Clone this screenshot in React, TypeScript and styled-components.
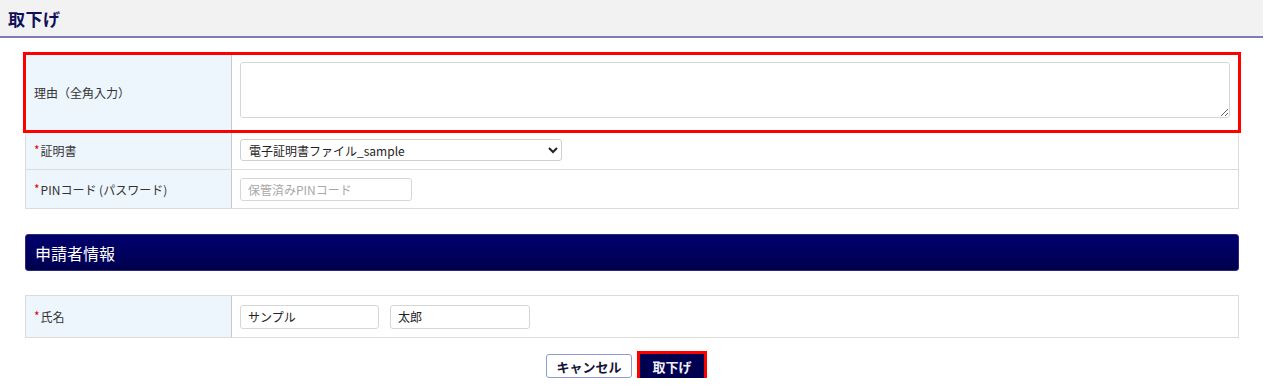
import React from "react";
import styled, { createGlobalStyle } from "styled-components";

const Global = createGlobalStyle`
  html, body { margin: 0; padding: 0; background: #fff; }
  body { font-family: "Noto Sans CJK JP", "Noto Sans", sans-serif; color: #333; }
  * { box-sizing: border-box; }
`;

const Page = styled.div`
  width: 1266px;
`;

const TitleBar = styled.div`
  height: 38px;
  margin-right: 3px;
  background: #f2f2f2;
  border-bottom: 2px solid #7d7db3;
  display: flex;
  align-items: center;
  padding-left: 8px;
`;

const Title = styled.h1`
  margin: 0;
  font-size: 17px;
  font-weight: 700;
  color: #10105a;
  letter-spacing: 0.5px;
`;

const Content = styled.div`
  padding: 15px 27px 0 25px;
  display: flex;
  flex-direction: column;
`;

const Table = styled.div<{ $mt?: number }>`
  border-top: 1px solid #dcdcdc;
  border-left: 1px solid #dcdcdc;
  border-right: 1px solid #dcdcdc;
  margin-top: ${(p) => p.$mt ?? 0}px;
`;

const Row = styled.div<{ $h: number; $highlight?: boolean }>`
  display: grid;
  grid-template-columns: 206px 1fr;
  height: ${(p) => p.$h}px;
  border-bottom: 1px solid #dcdcdc;
  ${(p) =>
    p.$highlight &&
    `outline: 3px solid #ff0000; outline-offset: -1px; position: relative; z-index: 1; margin: 0 -1px; padding: 0 1px;`}
`;

const Label = styled.div`
  background: #edf5fd;
  border-right: 1px solid #c9c9c9;
  display: flex;
  align-items: center;
  padding-left: 8px;
  font-size: 12px;
  color: #333;
`;

const Req = styled.span`
  color: #e60000;
  font-size: 12px;
  margin-right: 1px;
  position: relative;
  top: -1px;
`;

const Value = styled.div<{ $align?: string }>`
  display: flex;
  align-items: ${(p) => p.$align ?? "center"};
  padding: 0 8px;
  gap: 11px;
  background: #fff;
`;

const TextArea = styled.textarea`
  display: block;
  width: 100%;
  height: 56px;
  margin-top: 8px;
  border: 1px solid #d6d6d6;
  border-radius: 3px;
  font-family: inherit;
  font-size: 12px;
  outline: none;
`;

const Select = styled.select`
  width: 322px;
  height: 22px;
  border: 1px solid #cfcfcf;
  border-radius: 3px;
  background: #fff;
  font-family: "Noto Sans CJK JP", sans-serif;
  font-size: 12px;
  color: #222;
  padding: 0 4px;
  outline: none;
`;

const Input = styled.input<{ $w: number; $h: number }>`
  width: ${(p) => p.$w}px;
  height: ${(p) => p.$h}px;
  border: 1px solid #d6d6d6;
  border-radius: 3px;
  font-family: "Noto Sans CJK JP", sans-serif;
  font-size: 12px;
  color: #222;
  padding: 0 7px;
  outline: none;
  &::placeholder { color: #a8a8a8; }
`;

const Section = styled.div`
  margin-top: 25px;
  height: 37px;
  border-radius: 3px;
  background: linear-gradient(#00006e, #00004f);
  border: 1px solid #2a2a78;
  display: flex;
  align-items: center;
  padding-left: 9px;
  color: #fff;
  font-size: 16px;
`;

const Buttons = styled.div`
  display: flex;
  justify-content: center;
  align-items: center;
  gap: 8px;
  margin-top: 16px;
  padding-right: 14px;
`;

const Button = styled.button<{ $primary?: boolean }>`
  height: 24px;
  padding: 0;
  width: ${(p) => (p.$primary ? 64 : 86)}px;
  font-family: "Noto Sans CJK JP", sans-serif;
  font-weight: 700;
  font-size: 13px;
  border-radius: ${(p) => (p.$primary ? 0 : 3)}px;
  border: 1px solid ${(p) => (p.$primary ? "#00004f" : "#8d9ad6")};
  background: ${(p) => (p.$primary ? "#000050" : "#fff")};
  color: ${(p) => (p.$primary ? "#f0f0f8" : "#141438")};
  ${(p) => p.$primary && `outline: 3px solid #ff0000; outline-offset: 0;`}
`;

export default function App() {
  return (
    <Page>
      <Global />
      <TitleBar>
        <Title>取下げ</Title>
      </TitleBar>
      <Content>
        <Table>
          <Row $h={77} $highlight>
            <Label>理由（全角入力）</Label>
            <Value $align="flex-start">
              <TextArea />
            </Value>
          </Row>
          <Row $h={39}>
            <Label>
              <Req>*</Req>証明書
            </Label>
            <Value>
              <Select defaultValue="s">
                <option value="s">電子証明書ファイル_sample</option>
              </Select>
            </Value>
          </Row>
          <Row $h={39}>
            <Label>
              <Req>*</Req>PINコード (パスワード)
            </Label>
            <Value>
              <Input $w={172} $h={23} placeholder="保管済みPINコード" />
            </Value>
          </Row>
        </Table>
        <Section>申請者情報</Section>
        <Table $mt={24}>
          <Row $h={42}>
            <Label>
              <Req>*</Req>氏名
            </Label>
            <Value>
              <Input $w={139} $h={24} defaultValue="サンプル" />
              <Input $w={140} $h={24} defaultValue="太郎" />
            </Value>
          </Row>
        </Table>
        <Buttons>
          <Button>キャンセル</Button>
          <Button $primary>取下げ</Button>
        </Buttons>
      </Content>
    </Page>
  );
}
